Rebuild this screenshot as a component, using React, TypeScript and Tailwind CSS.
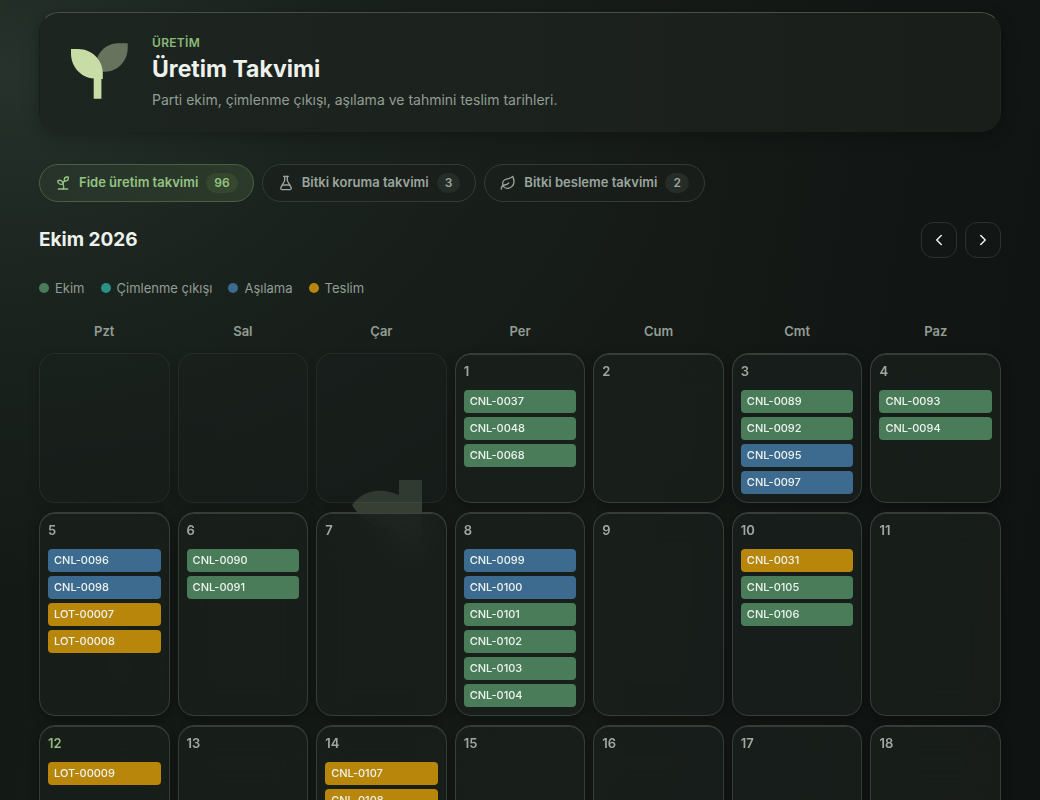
import { clsx } from "clsx";
import {
  ChevronLeft,
  ChevronRight,
  FlaskConical,
  Leaf,
  Sprout,
} from "lucide-react";
import { useState } from "react";

type EventKind = "sowing" | "germination" | "grafting" | "delivery";

interface CalendarEvent {
  code: string;
  kind: EventKind;
}

interface CalendarDay {
  day: number | null;
  today?: boolean;
  events?: CalendarEvent[];
}

const KIND_COLORS: Record<EventKind, string> = {
  sowing: "bg-[#4a7c59]",
  germination: "bg-[#2a9184]",
  grafting: "bg-[#3d6a8f]",
  delivery: "bg-[#b8860b]",
};

const LEGEND: { kind: EventKind; label: string }[] = [
  { kind: "sowing", label: "Ekim" },
  { kind: "germination", label: "Çimlenme çıkışı" },
  { kind: "grafting", label: "Aşılama" },
  { kind: "delivery", label: "Teslim" },
];

const TABS = [
  { id: "seedling", label: "Fide üretim takvimi", count: 96, icon: Sprout },
  { id: "protection", label: "Bitki koruma takvimi", count: 3, icon: FlaskConical },
  { id: "feeding", label: "Bitki besleme takvimi", count: 2, icon: Leaf },
];

const WEEKDAYS = ["Pzt", "Sal", "Çar", "Per", "Cum", "Cmt", "Paz"];

const sow = (code: string): CalendarEvent => ({ code, kind: "sowing" });
const graft = (code: string): CalendarEvent => ({ code, kind: "grafting" });
const deliver = (code: string): CalendarEvent => ({ code, kind: "delivery" });

const DAYS: CalendarDay[] = [
  { day: null },
  { day: null },
  { day: null },
  { day: 1, events: [sow("CNL-0037"), sow("CNL-0048"), sow("CNL-0068")] },
  { day: 2 },
  {
    day: 3,
    events: [sow("CNL-0089"), sow("CNL-0092"), graft("CNL-0095"), graft("CNL-0097")],
  },
  { day: 4, events: [sow("CNL-0093"), sow("CNL-0094")] },
  {
    day: 5,
    events: [graft("CNL-0096"), graft("CNL-0098"), deliver("LOT-00007"), deliver("LOT-00008")],
  },
  { day: 6, events: [sow("CNL-0090"), sow("CNL-0091")] },
  { day: 7 },
  {
    day: 8,
    events: [
      graft("CNL-0099"),
      graft("CNL-0100"),
      sow("CNL-0101"),
      sow("CNL-0102"),
      sow("CNL-0103"),
      sow("CNL-0104"),
    ],
  },
  { day: 9 },
  { day: 10, events: [deliver("CNL-0031"), sow("CNL-0105"), sow("CNL-0106")] },
  { day: 11 },
  { day: 12, today: true, events: [deliver("LOT-00009")] },
  { day: 13 },
  { day: 14, events: [deliver("CNL-0107"), deliver("CNL-0108")] },
  { day: 15 },
  { day: 16 },
  { day: 17 },
  { day: 18 },
];

function SproutLogo() {
  return (
    <svg viewBox="0 0 72 72" className="h-18 w-18 shrink-0" aria-hidden="true">
      <path
        d="M63.700 7.300V12C63.700 25 53.500 35.700 41 35.700H37L33.500 21C37 13 45 7.300 54 7.300z"
        fill="#66745d"
      />
      <path
        d="M7 13H14C28 13 38.800 24 38.800 37V43H37.400V62.700H29.700V42.500C16.500 41.500 7 30.500 7 17.500z"
        fill="#c8dda5"
      />
    </svg>
  );
}

// Faint mark that sits behind the calendar cells
function Watermark() {
  return (
    <svg
      viewBox="0 0 70 78"
      className="pointer-events-none absolute top-[127px] left-[313px] h-[78px] w-[70px] text-[#3c453a]"
      aria-hidden="true"
    >
      <path d="M47 0h23v78H48V50C26 50 10 42 0 25 12 9 30 8 47 15z" fill="currentColor" />
    </svg>
  );
}

function PageHeader() {
  return (
    <header className="flex items-center gap-4 rounded-[20px] border border-transparent border-t-[#465047] bg-[#1c221e] bg-linear-to-r from-[#1d2520] to-[#1a1e1a] px-6 py-5 shadow-[0_4px_16px_rgba(0,0,0,0.26)]">
      <SproutLogo />
      <div>
        <p className="text-xs leading-5 font-semibold tracking-wide text-[#8abb79]">ÜRETİM</p>
        <h1 className="text-[23px] leading-8 font-bold text-[#edf2ed]">Üretim Takvimi</h1>
        <p className="mt-1 text-sm leading-[22px] text-[#929d94]">
          Parti ekim, çimlenme çıkışı, aşılama ve tahmini teslim tarihleri.
        </p>
      </div>
    </header>
  );
}

function DayCell({ day, today, events = [] }: CalendarDay) {
  if (day === null) {
    return (
      <div className="min-h-[150px] rounded-2xl border border-white/6 bg-[#1c221d]/30 shadow-[0_4px_12px_rgba(0,0,0,0.12)]" />
    );
  }
  return (
    <div className="min-h-[150px] rounded-2xl border border-[#373e38] bg-[#191f1b]/80 p-2 shadow-[inset_0_1px_0_rgba(255,255,255,0.14),0_4px_12px_rgba(0,0,0,0.3)] backdrop-blur-lg">
      <div
        className={clsx(
          "text-[13px] leading-[18px] font-semibold",
          today ? "text-[#94ba80]" : "text-[#a0a9a1]",
        )}
      >
        {day}
      </div>
      {events.length > 0 && (
        <div className="mt-[10px] flex flex-col gap-1">
          {events.map((event) => (
            <button
              key={event.code}
              type="button"
              className={clsx(
                "h-[23px] w-full truncate rounded-[4px] px-1.5 text-left text-[11px] font-medium text-[#edf4ee]",
                KIND_COLORS[event.kind],
              )}
            >
              {event.code}
            </button>
          ))}
        </div>
      )}
    </div>
  );
}

export default function App() {
  const [activeTab, setActiveTab] = useState("seedling");

  return (
    <div className="relative min-h-screen bg-[#0e1311] bg-[radial-gradient(ellipse_700px_520px_at_0px_70px,#26322b_0%,#1b231e_45%,transparent_100%),linear-gradient(100deg,#131a16_0%,#151a17_60%,#0e1211_100%)] bg-no-repeat px-[39px] pt-3 pb-8 font-[Inter,'Noto_Sans',sans-serif]">
      <PageHeader />

      <div role="tablist" className="mt-8 flex flex-wrap gap-2">
        {TABS.map(({ id, label, count, icon: Icon }) => {
          const active = id === activeTab;
          return (
            <button
              key={id}
              type="button"
              role="tab"
              aria-selected={active}
              onClick={() => setActiveTab(id)}
              className={clsx(
                "flex h-[38px] items-center gap-2 rounded-full border px-[15px] text-[13px] font-semibold",
                active
                  ? "border-[#466041] bg-linear-to-r from-[#27332a] to-[#2b3a2a] text-[#94c381]"
                  : "border-[#343b35] bg-[#1a201c]/60 text-[#9ba59d]",
              )}
            >
              <Icon className="size-4" />
              {label}
              <span
                className={clsx(
                  "rounded-full px-2 text-xs leading-5",
                  active ? "bg-[#35472f]" : "bg-[#262c28]",
                )}
              >
                {count}
              </span>
            </button>
          );
        })}
      </div>

      <div className="mt-5 flex items-center justify-between">
        <h2 className="text-[19px] leading-7 font-bold text-[#edf2ed]">Ekim 2026</h2>
        <div className="flex gap-2">
          <button
            type="button"
            aria-label="Önceki ay"
            className="flex size-9 items-center justify-center rounded-xl border border-[#2c322e] bg-[#121715] text-[#edf2ed]"
          >
            <ChevronLeft className="size-[18px]" />
          </button>
          <button
            type="button"
            aria-label="Sonraki ay"
            className="flex size-9 items-center justify-center rounded-xl border border-[#2c322e] bg-[#121715] text-[#edf2ed]"
          >
            <ChevronRight className="size-[18px]" />
          </button>
        </div>
      </div>

      <ul className="mt-5 flex flex-wrap gap-4 text-[13px] leading-5 text-[#929d94]">
        {LEGEND.map(({ kind, label }) => (
          <li key={kind} className="flex items-center gap-1.5">
            <span className={clsx("size-[10px] rounded-full", KIND_COLORS[kind])} />
            {label}
          </li>
        ))}
      </ul>

      <div className="mt-6 grid grid-cols-7 gap-x-2 text-center text-[13px] leading-[18px] font-semibold text-[#929d94]">
        {WEEKDAYS.map((weekday) => (
          <div key={weekday}>{weekday}</div>
        ))}
      </div>

      <div className="relative mt-[13px]">
        <Watermark />
        <div className="relative grid grid-cols-7 gap-x-2 gap-y-[9px]">
          {DAYS.map((item, index) => (
            <DayCell key={index} {...item} />
          ))}
        </div>
      </div>
    </div>
  );
}
